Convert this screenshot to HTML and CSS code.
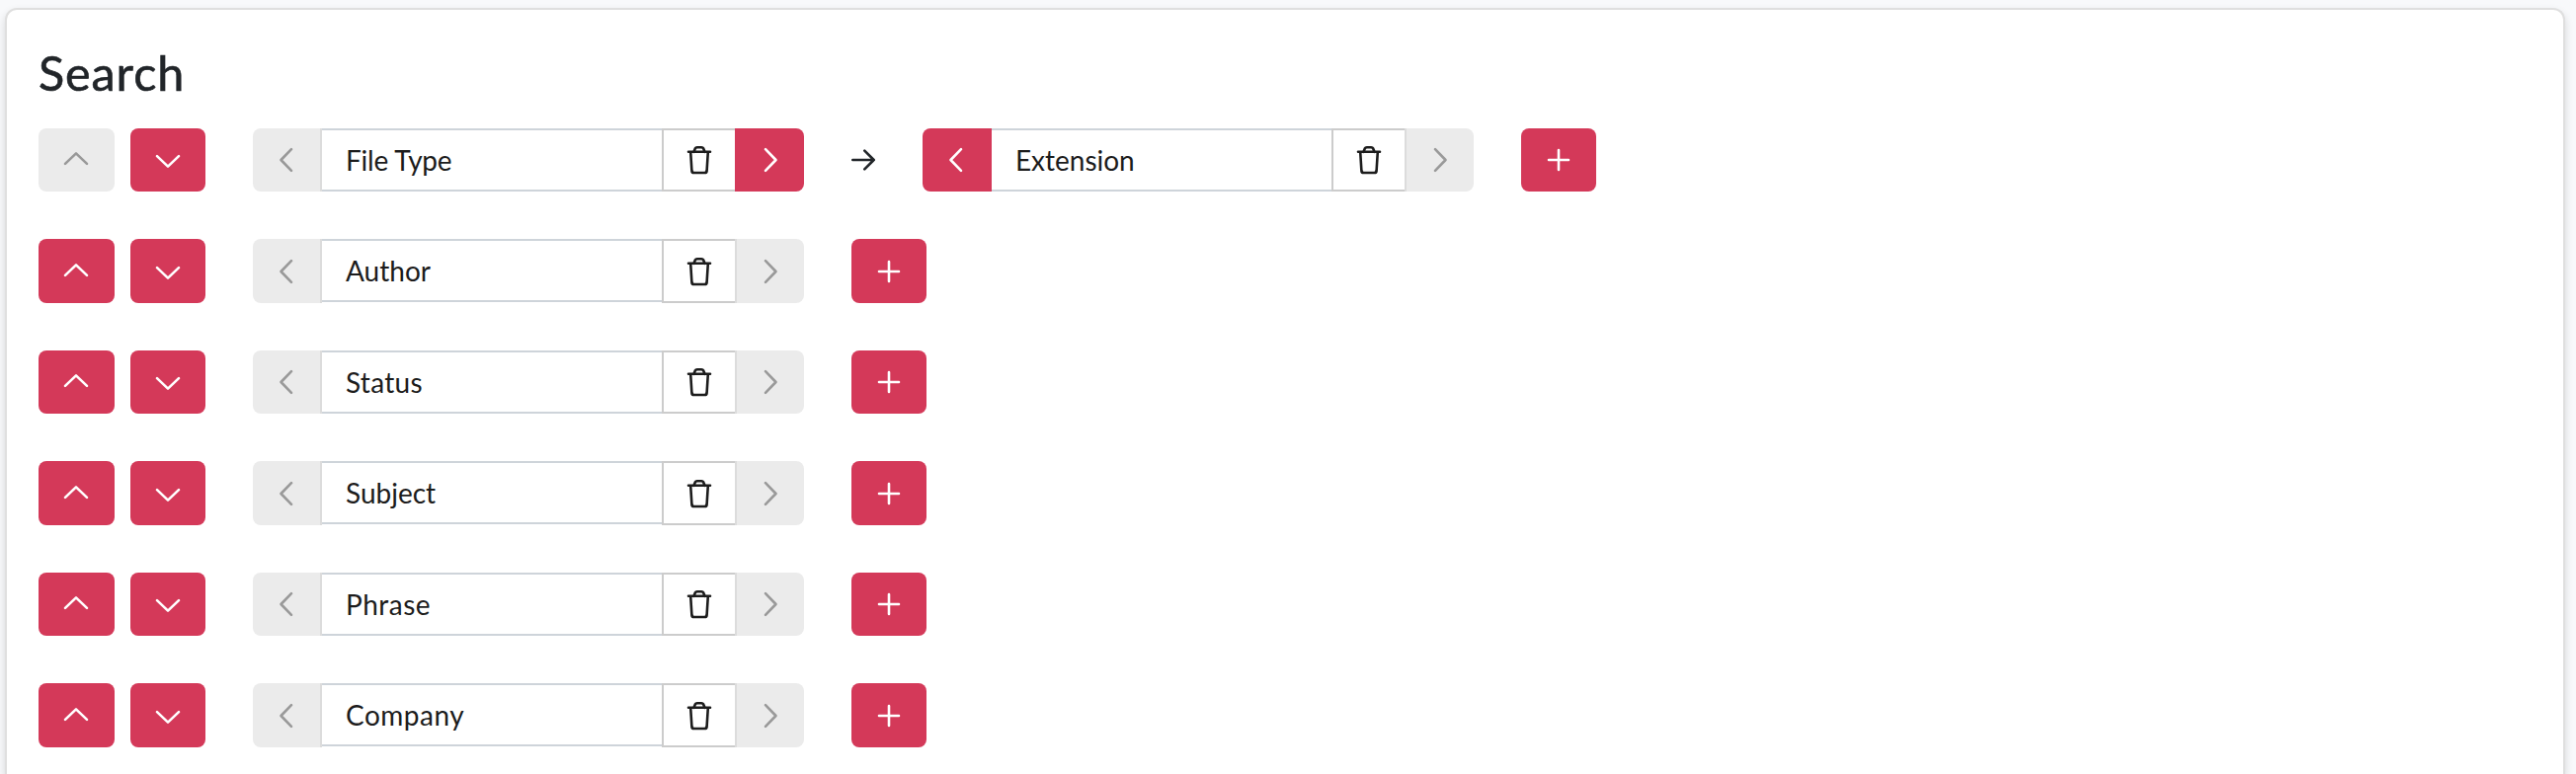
FILE: index.html
```html
<!DOCTYPE html>
<html lang="en">
<head>
  <meta charset="UTF-8" />
  <title>Search</title>
  <meta name="viewport" content="width=device-width, initial-scale=1" />
  <link rel="stylesheet" href="styles.css">
</head>
<body>
  <svg class="sprite">
    <symbol id="up" viewBox="0 0 26 26"><path d="M2 16.9L13 6.4L24 16.9" /></symbol>
    <symbol id="down" viewBox="0 0 26 26"><path d="M2 9.1L13 19.6L24 9.1" /></symbol>
    <symbol id="left" viewBox="0 0 26 26"><path d="M18 2.2L7.5 13L18 23.8" /></symbol>
    <symbol id="right" viewBox="0 0 26 26"><path d="M8 2.2L18.5 13L8 23.8" /></symbol>
    <symbol id="plus" viewBox="0 0 26 26"><path d="M13 3V23M3 13H23" /></symbol>
    <symbol id="arrow" viewBox="1 0 24 26"><path d="M2.3 13H23.7M14.3 3.6L23.7 13L14.3 22.4" /></symbol>
    <symbol id="trash" viewBox="0 0 26 30"><path d="M2 6.8H24M4.2 7L5.4 26Q5.6 28 7.6 28H18.4Q20.4 28 20.6 26L21.8 7M7.4 6.8L8.8 3.4Q9.4 2.2 10.8 2.2H15.2Q16.6 2.2 17.2 3.4L18.6 6.8" /></symbol>
  </svg>

  <div class="card">
    <h1>Search</h1>
    <div class="rows" id="rows"></div>
  </div>

  <script>
    const rows = [
      ["File Type", "Extension"],
      ["Author"],
      ["Status"],
      ["Subject"],
      ["Phrase"],
      ["Company"]
    ];

    function button(icon, extra, disabled) {
      return `<button class="btn ${extra}" ${disabled ? "disabled" : ""} aria-label="${icon}"><svg class="icon"><use href="#${icon}" /></svg></button>`;
    }

    function group(label, index, count) {
      return `<div class="group">
        ${button("left", "side first", index === 0)}
        <div class="field"><span class="label-${label.split(" ")[0].toLowerCase()}">${label}</span></div>
        ${button("trash", "trash", false)}
        ${button("right", "side last", index === count - 1)}
      </div>`;
    }

    document.getElementById("rows").innerHTML = rows.map((labels, i) => `
      <div class="row">
        <div class="order">${button("up", "", i === 0)}${button("down", "", false)}</div>
        ${labels.map((label, j) => group(label, j, labels.length)).join('<svg class="icon arrow"><use href="#arrow" /></svg>')}
        ${button("plus", "", false)}
      </div>`).join("");
  </script>
</body>
</html>
```
FILE: styles.css
```css
* {
  box-sizing: border-box;
}

body {
  margin: 0;
  padding: 8px 11px 0 5px;
  height: 784px;
  overflow: hidden;
  background-color: #f8f9fb;
  font-family: Lato, "Liberation Sans", sans-serif;
  color: #212529;
}

.sprite {
  display: none;
}

.card {
  height: 776px;
  padding: 32px 32px 0;
  background: #fff;
  border: 2px solid #dfdfdf;
  border-bottom: none;
  border-radius: 12px 12px 0 0;
  box-shadow: 0 4px 8px rgba(0, 0, 0, 0.14);
}

h1 {
  margin: 0 0 16px;
  height: 71.9px;
  font-size: 48.5px;
  line-height: 62px;
  font-weight: 400;
  letter-spacing: 0.9px;
  -webkit-text-stroke: 0.6px #212529;
}

.rows {
  display: flex;
  flex-direction: column;
  gap: 48px;
}

.row {
  display: flex;
  align-items: center;
  gap: 48px;
  height: 64.5px;
}

.order {
  display: flex;
  gap: 16px;
  height: 100%;
}

.group {
  display: flex;
  height: 100%;
}

.btn {
  display: flex;
  align-items: center;
  justify-content: center;
  width: 76.5px;
  height: 100%;
  padding: 0;
  border: none;
  border-radius: 8px;
  background-color: #d43959;
  color: #fff;
}

.btn:disabled {
  background-color: #ebebeb;
  color: #999;
}

.side {
  width: 70px;
}

.first {
  border-right: 2px solid #d43959;
  border-radius: 8px 0 0 8px;
}

.last {
  width: 69.9px;
  border-left: 2px solid #d43959;
  border-radius: 0 8px 8px 0;
}

.side:disabled {
  border-color: #dcdcdc;
}

.field {
  display: flex;
  align-items: center;
  width: 344px;
  height: 64px;
  padding-left: 24px;
  border: solid #ced4da;
  border-width: 2px 0;
  color: #1c1c1c;
  font-size: 28px;
  line-height: 40px;
}

.label-file {
  letter-spacing: -0.2px;
}

.label-status {
  letter-spacing: 0.3px;
}

.label-phrase {
  letter-spacing: 0.5px;
}

.label-company {
  letter-spacing: 0.5px;
}

.trash {
  width: 74px;
  border: 2px solid #ccc;
  border-right: none;
  border-radius: 0;
  background: #fff;
  color: #1c1c1c;
}

.icon {
  width: 26px;
  height: 26px;
  fill: none;
  stroke: currentColor;
  stroke-width: 2.6;
  stroke-linecap: round;
  stroke-linejoin: round;
}

.arrow {
  width: 24px;
}

.trash .icon {
  height: 30px;
}
```
